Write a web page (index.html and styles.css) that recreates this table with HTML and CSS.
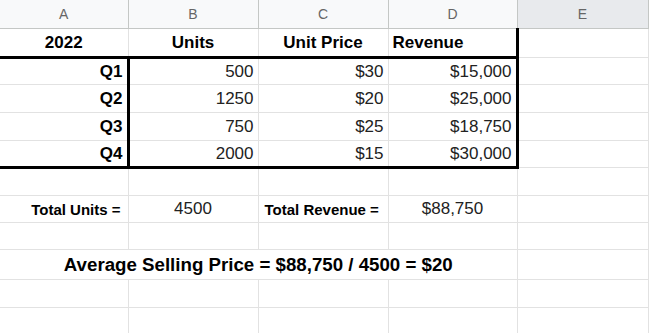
FILE: index.html
```html
<!DOCTYPE html>
<html>
<head>
    <title>Average Selling Price</title>
<link rel="stylesheet" href="styles.css">
</head>

<body>

    <table class="sheet">
        <colgroup>
            <col class="col-a">
            <col class="col-b">
            <col class="col-c">
            <col class="col-d">
            <col class="col-e">
        </colgroup>
        <thead>
            <tr class="col-heads">
                <th>A</th>
                <th>B</th>
                <th>C</th>
                <th>D</th>
                <th class="selected">E</th>
            </tr>
        </thead>
        <tbody>
            <!-- title row -->
            <tr>
                <td class="bold center">2022</td>
                <td class="bold center">Units</td>
                <td class="bold center">Unit Price</td>
                <td class="bold box-right">Revenue</td>
                <td></td>
            </tr>
            <tr class="box-top">
                <td class="bold right box-label">Q1</td>
                <td class="right">500</td>
                <td class="right">$30</td>
                <td class="right box-right">$15,000</td>
                <td></td>
            </tr>
            <tr>
                <td class="bold right box-label">Q2</td>
                <td class="right">1250</td>
                <td class="right">$20</td>
                <td class="right box-right">$25,000</td>
                <td></td>
            </tr>
            <tr>
                <td class="bold right box-label">Q3</td>
                <td class="right">750</td>
                <td class="right">$25</td>
                <td class="right box-right">$18,750</td>
                <td></td>
            </tr>
            <tr class="box-bottom">
                <td class="bold right box-label">Q4</td>
                <td class="right">2000</td>
                <td class="right">$15</td>
                <td class="right box-right">$30,000</td>
                <td></td>
            </tr>
            <tr class="short">
                <td></td><td></td><td></td><td></td><td></td>
            </tr>
            <!-- totals -->
            <tr class="short">
                <td class="bold right small total-units">Total Units =</td>
                <td class="center">4500</td>
                <td class="bold small total-rev">Total Revenue =</td>
                <td class="center">$88,750</td>
                <td></td>
            </tr>
            <tr class="short">
                <td></td><td></td><td></td><td></td><td></td>
            </tr>
            <tr class="avg-row">
                <td colspan="4" class="bold center avg">Average Selling Price = $88,750 / 4500 = $20</td>
                <td></td>
            </tr>
            <tr>
                <td></td><td></td><td></td><td></td><td></td>
            </tr>
            <tr>
                <td></td><td></td><td></td><td></td><td></td>
            </tr>
        </tbody>
    </table>

</body>
</html>
```

FILE: styles.css
```css
/* General Styling */
body {
    margin: 0;
    padding: 0;
    background: #fff;
    font-family: "Liberation Sans", Arial, sans-serif;
    color: #222;
    overflow: hidden;
}

/* Sheet grid */
.sheet {
    border-collapse: collapse;
    table-layout: fixed;
    width: 648px;
}

.col-a { width: 128px; }
.col-b { width: 130px; }
.col-c { width: 130px; }
.col-d { width: 129px; }
.col-e { width: 131px; }

.sheet td {
    height: 27px;
    padding: 0 4px;
    font-size: 17px;
    border: 1px solid #e2e2e2;
    border-left: none;
    white-space: nowrap;
    overflow: hidden;
}

/* Column letters */
.col-heads th {
    height: 28px;
    padding: 0;
    background: #f8f9fa;
    color: #666;
    font-size: 14px;
    font-weight: normal;
    border: 1px solid #c4c7c5;
    border-top: none;
    border-left: none;
}

.col-heads th.selected {
    background: #e8eaed;
}

/* Cell formats */
.bold { font-weight: bold; color: #000; }
.center { text-align: center; }
.right { text-align: right; }
.sheet td.small { font-size: 15px; }
.sheet td.total-units { padding-right: 7px; }
.sheet td.total-rev { padding-left: 6px; }

/* Thick outline around the quarterly data */
.box-top td:nth-child(-n+4) { border-top: 3px solid #000; }
.box-bottom td:nth-child(-n+4) { border-bottom: 3px solid #000; }
.sheet .box-top td,
.sheet .box-bottom td { height: 25px; }
.sheet td.box-label { border-right: 3px solid #000; }
.sheet td.box-right { border-right: 3px solid #000; }

.sheet .short td { height: 26px; }

/* Average row */
.sheet .avg-row td { height: 29px; }
.sheet td.avg { font-size: 18.7px; }
```
